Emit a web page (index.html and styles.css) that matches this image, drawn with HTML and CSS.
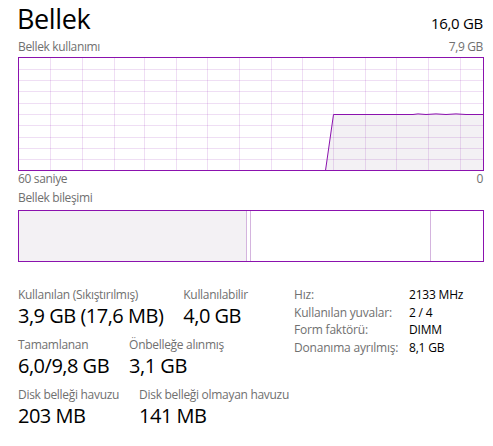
FILE: index.html
```html
<!DOCTYPE html>
<html lang="tr">
<head>
<meta charset="utf-8">
<title>Bellek</title>
<link rel="stylesheet" href="styles.css">
</head>
<body>
<div class="panel">
  <div class="header">
    <div class="title">Bellek</div>
    <div class="total">16,0 GB</div>
  </div>
  <div class="caption-row top-cap">
    <span>Bellek kullanımı</span>
    <span>7,9 GB</span>
  </div>
  <div class="graph">
    <svg width="466" height="114" viewBox="0 0 466 114">
      <polygon class="area" points="307.5,113 315.5,57.5 395,57.5 400,56.9 408,57.5 418,56.9 428,57.5 438,56.9 448,57.5 465,57.5 465,113"/>
      <g class="grid">
        <line x1="32.5" y1="0" x2="32.5" y2="114"/>
        <line x1="64.5" y1="0" x2="64.5" y2="114"/>
        <line x1="96.5" y1="0" x2="96.5" y2="114"/>
        <line x1="126.5" y1="0" x2="126.5" y2="114"/>
        <line x1="158.5" y1="0" x2="158.5" y2="114"/>
        <line x1="189.5" y1="0" x2="189.5" y2="114"/>
        <line x1="221.5" y1="0" x2="221.5" y2="114"/>
        <line x1="253.5" y1="0" x2="253.5" y2="114"/>
        <line x1="284.5" y1="0" x2="284.5" y2="114"/>
        <line x1="315.5" y1="0" x2="315.5" y2="114"/>
        <line x1="347.5" y1="0" x2="347.5" y2="114"/>
        <line x1="378.5" y1="0" x2="378.5" y2="114"/>
        <line x1="410.5" y1="0" x2="410.5" y2="114"/>
        <line x1="442.5" y1="0" x2="442.5" y2="114"/>
        <line x1="0" y1="12.5" x2="466" y2="12.5"/>
        <line x1="0" y1="23.5" x2="466" y2="23.5"/>
        <line x1="0" y1="34.5" x2="466" y2="34.5"/>
        <line x1="0" y1="46.5" x2="466" y2="46.5"/>
        <line x1="0" y1="57.5" x2="466" y2="57.5"/>
        <line x1="0" y1="68.5" x2="466" y2="68.5"/>
        <line x1="0" y1="80.5" x2="466" y2="80.5"/>
        <line x1="0" y1="91.5" x2="466" y2="91.5"/>
        <line x1="0" y1="102.5" x2="466" y2="102.5"/>
      </g>
      <polyline class="trace" points="307.5,113.5 315.5,57.5 395,57.5 400,56.9 408,57.5 418,56.9 428,57.5 438,56.9 448,57.5 465,57.5"/>
      <rect class="frame" x="0.5" y="0.5" width="465" height="113"/>
    </svg>
  </div>
  <div class="caption-row">
    <span>60 saniye</span>
    <span>0</span>
  </div>
  <div class="caption-row comp-cap">
    <span>Bellek bileşimi</span>
  </div>
  <div class="composition">
    <svg width="466" height="52" viewBox="0 0 466 52">
      <rect class="inuse" x="0" y="0" width="228" height="52"/>
      <line class="sep" x1="228.5" y1="0" x2="228.5" y2="52"/>
      <line class="sep" x1="232.5" y1="0" x2="232.5" y2="52"/>
      <line class="sep" x1="412.5" y1="0" x2="412.5" y2="52"/>
      <rect class="frame" x="0.5" y="0.5" width="465" height="51"/>
    </svg>
  </div>
  <div class="stats">
    <div class="stat-groups">
      <div class="stat-row">
        <div class="stat"><div class="label">Kullanılan (Sıkıştırılmış)</div><div class="value">3,9 GB (17,6 MB)</div></div>
        <div class="stat"><div class="label">Kullanılabilir</div><div class="value">4,0 GB</div></div>
      </div>
      <div class="stat-row">
        <div class="stat"><div class="label">Tamamlanan</div><div class="value">6,0/9,8 GB</div></div>
        <div class="stat"><div class="label">Önbelleğe alınmış</div><div class="value">3,1 GB</div></div>
      </div>
      <div class="stat-row">
        <div class="stat"><div class="label">Disk belleği havuzu</div><div class="value">203 MB</div></div>
        <div class="stat"><div class="label">Disk belleği olmayan havuzu</div><div class="value">141 MB</div></div>
      </div>
    </div>
    <div class="details">
      <span class="dlabel">Hız:</span><span class="dvalue">2133 MHz</span>
      <span class="dlabel">Kullanılan yuvalar:</span><span class="dvalue">2 / 4</span>
      <span class="dlabel">Form faktörü:</span><span class="dvalue">DIMM</span>
      <span class="dlabel">Donanıma ayrılmış:</span><span class="dvalue">8,1 GB</span>
    </div>
  </div>
</div>
</body>
</html>
```
FILE: styles.css
```css
html, body {
  margin: 0;
  padding: 0;
  background: #ffffff;
}
body {
  font-family: "Open Sans", "Noto Sans", sans-serif;
  color: #000000;
}
.panel {
  width: 493px;
  height: 446px;
  padding: 0 10px 0 18px;
  box-sizing: border-box;
  overflow: hidden;
}
.header {
  display: flex;
  justify-content: space-between;
  align-items: baseline;
  height: 34px;
}
.title {
  font-size: 27px;
  line-height: 37px;
  letter-spacing: -0.4px;
  margin-left: -1px;
}
.total {
  font-size: 15px;
  line-height: 20px;
  letter-spacing: -0.3px;
}
.caption-row {
  display: flex;
  justify-content: space-between;
  font-size: 12px;
  line-height: 16px;
  letter-spacing: -0.35px;
  color: #707070;
}
.top-cap {
  margin-top: 5px;
  margin-bottom: 2px;
}
.comp-cap {
  margin-top: 3px;
  margin-bottom: 4px;
}
.graph, .composition {
  display: block;
  line-height: 0;
}
.graph svg, .composition svg {
  display: block;
}
.area {
  fill: #f3f1f4;
}
.grid line {
  stroke: rgba(139, 18, 174, 0.14);
  stroke-width: 1;
}
.trace {
  fill: none;
  stroke: #8b12ae;
  stroke-width: 1;
}
.frame {
  fill: none;
  stroke: #8b12ae;
  stroke-width: 1;
}
.inuse {
  fill: #f3f1f4;
}
.sep {
  stroke: #d4b4de;
  stroke-width: 1;
}
.stats {
  display: flex;
  margin-top: 25px;
}
.stat-groups {
  width: 276px;
  display: flex;
  flex-direction: column;
  gap: 8px;
}
.stat-row {
  display: flex;
  gap: 20px;
}
.label {
  font-size: 12px;
  line-height: 16px;
  letter-spacing: -0.3px;
  color: #707070;
  white-space: nowrap;
}
.value {
  font-size: 20px;
  line-height: 26px;
  letter-spacing: -0.5px;
  white-space: nowrap;
}
.details {
  display: grid;
  grid-template-columns: 115px auto;
  font-size: 12px;
  line-height: 17.7px;
  letter-spacing: -0.2px;
  align-content: start;
  margin-top: -1px;
}
.dlabel {
  color: #707070;
  white-space: nowrap;
}
.dvalue {
  color: #000000;
  white-space: nowrap;
}
```
